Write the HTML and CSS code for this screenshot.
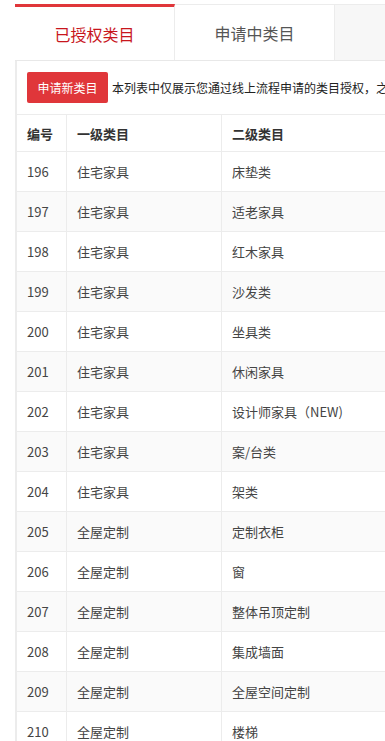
FILE: index.html
```html
<!DOCTYPE html>
<html lang="zh-CN">
<head>
    <meta charset="UTF-8">
    <meta name="viewport" content="width=device-width, initial-scale=1.0">
    <title>类目授权</title>
    <link rel="stylesheet" href="styles.css">
</head>
<body>
    <div class="page">
        <!-- Onglets -->
        <div class="tabs">
            <div class="tab active">已授权类目</div>
            <div class="tab">申请中类目</div>
            <div class="tab-rest"></div>
        </div>

        <div class="panel">
            <div class="toolbar">
                <button type="button" class="btn-apply">申请新类目</button>
                <span class="tip">本列表中仅展示您通过线上流程申请的类目授权，之前线下签约授权的类目请联系招商经理确认</span>
            </div>

            <table class="cat-table">
                <thead>
                    <tr>
                        <th class="col-id">编号</th>
                        <th class="col-lv1">一级类目</th>
                        <th class="col-lv2">二级类目</th>
                        <th></th>
                    </tr>
                </thead>
                <tbody>
                    <tr><td>196</td><td>住宅家具</td><td>床垫类</td><td></td></tr>
                    <tr><td>197</td><td>住宅家具</td><td>适老家具</td><td></td></tr>
                    <tr><td>198</td><td>住宅家具</td><td>红木家具</td><td></td></tr>
                    <tr><td>199</td><td>住宅家具</td><td>沙发类</td><td></td></tr>
                    <tr><td>200</td><td>住宅家具</td><td>坐具类</td><td></td></tr>
                    <tr><td>201</td><td>住宅家具</td><td>休闲家具</td><td></td></tr>
                    <tr><td>202</td><td>住宅家具</td><td>设计师家具（NEW)</td><td></td></tr>
                    <tr><td>203</td><td>住宅家具</td><td>案/台类</td><td></td></tr>
                    <tr><td>204</td><td>住宅家具</td><td>架类</td><td></td></tr>
                    <tr><td>205</td><td>全屋定制</td><td>定制衣柜</td><td></td></tr>
                    <tr><td>206</td><td>全屋定制</td><td>窗</td><td></td></tr>
                    <tr><td>207</td><td>全屋定制</td><td>整体吊顶定制</td><td></td></tr>
                    <tr><td>208</td><td>全屋定制</td><td>集成墙面</td><td></td></tr>
                    <tr><td>209</td><td>全屋定制</td><td>全屋空间定制</td><td></td></tr>
                    <tr><td>210</td><td>全屋定制</td><td>楼梯</td><td></td></tr>
                </tbody>
            </table>
        </div>
    </div>
</body>
</html>
```

FILE: styles.css
```css
/* Fond de page */
body {
    font-family: "Noto Sans CJK SC", "Noto Sans", sans-serif;
    margin: 0;
    padding: 0;
    background: #fff;
    color: #333;
    overflow: hidden;
}

.page {
    width: 900px;
    padding: 4px 0 0 15px;
}

/* Onglets */
.tabs {
    display: flex;
    border-top: 1px solid #ececec;
    border-bottom: 1px solid #e8e8e8;
    height: 55px;
}

.tab {
    width: 160px;
    display: flex;
    align-items: center;
    justify-content: center;
    font-size: 16px;
    color: #555;
    background: #fff;
    border-right: 1px solid #ececec;
    box-sizing: border-box;
}

.tab.active {
    color: #c8161d;
    border-top: 3px solid #e0363a;
    margin-top: -1px;
}

.tab-rest {
    flex: 1;
    background: #f7f7f7;
}

/* Contenu */
.panel {
    background: #fff;
    border-left: 2px solid #ececec;
    padding-top: 11px;
}

.toolbar {
    display: flex;
    align-items: center;
    gap: 4px;
    padding-left: 10px;
    height: 31px;
    margin-bottom: 11px;
}

.btn-apply {
    width: 81px;
    height: 31px;
    border: none;
    border-radius: 2px;
    background: #e0363a;
    color: #fff;
    font-family: inherit;
    font-size: 12px;
    padding: 0;
    cursor: pointer;
}

.tip {
    font-size: 12px;
    color: #222;
    white-space: nowrap;
}

.cat-table {
    border-collapse: collapse;
    width: 860px;
    font-size: 13px;
}

.cat-table th,
.cat-table td {
    border: 1px solid #ececec;
    border-left: none;
    text-align: left;
    padding: 0 10px;
    height: 39px;
    white-space: nowrap;
}

.cat-table th {
    font-weight: bold;
    color: #333;
    height: 36px;
}

.cat-table td {
    color: #444;
}

.cat-table .col-id {
    width: 29px;
}

.cat-table .col-lv1 {
    width: 134px;
}

.cat-table .col-lv2 {
    width: 200px;
}

.cat-table tbody tr:nth-child(even) {
    background: #fafafa;
}
```
